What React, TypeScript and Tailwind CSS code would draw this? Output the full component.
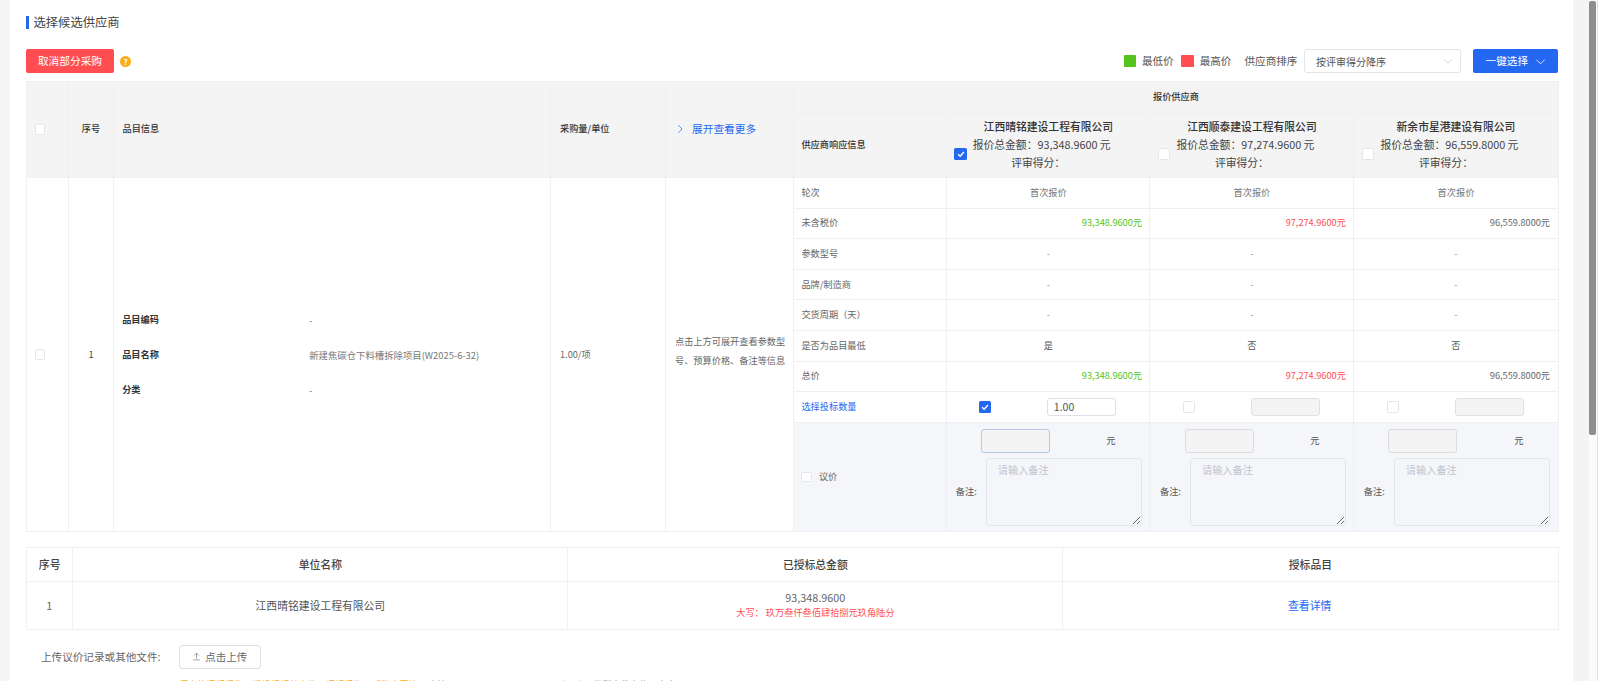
import React from "react";

function Chevron({ dir = "down", className = "" }: { dir?: "down" | "right"; className?: string }) {
  return (
    <svg viewBox="0 0 12 12" className={className} fill="none" stroke="currentColor" strokeWidth="0.9">
      {dir === "down" ? <polyline points="1.5,4 6,8.5 10.5,4" /> : <polyline points="4,1.5 8.5,6 4,10.5" />}
    </svg>
  );
}

function Box({ checked = false, big = false }: { checked?: boolean; big?: boolean }) {
  const size = big ? "w-[12.5px] h-[12.5px]" : "w-[10.5px] h-[10.5px]";
  if (checked) {
    return (
      <div className={`${size} shrink-0 rounded-[1.5px] bg-[#2468f2] flex items-center justify-center`}>
        <svg viewBox="0 0 12 12" className="w-[10px] h-[10px]" fill="none" stroke="#ffffff" strokeWidth="1.7">
          <polyline points="2.5,6.2 5,8.6 9.5,3.6" />
        </svg>
      </div>
    );
  }
  return <div className={`${size} shrink-0 rounded-[1.5px] bg-white border border-[#e4e6ec]`} />;
}

type Sup = { name: string; total: string; checked: boolean };
const suppliers: Sup[] = [
  { name: "江西晴铭建设工程有限公司", total: "93,348.9600", checked: true },
  { name: "江西顺泰建设工程有限公司", total: "97,274.9600", checked: false },
  { name: "新余市星港建设有限公司", total: "96,559.8000", checked: false },
];
const prices = [
  { v: "93,348.9600元", c: "text-[#52c41a]" },
  { v: "97,274.9600元", c: "text-[#ff4d52]" },
  { v: "96,559.8000元", c: "text-[#666666]" },
];

const bd = "border border-[#eff0f5]";
const th = `${bd} bg-[#f4f4f4] text-[9.2px] font-medium text-[#333333]`;

function Row({ label, children, blue = false }: { label: string; children: React.ReactNode; blue?: boolean }) {
  return (
    <tr className="h-[30.6px]">
      <td className={`${bd} pl-[7px] text-[9.2px] ${blue ? "text-[#2468f2]" : "text-[#666666]"}`}>{label}</td>
      {children}
    </tr>
  );
}

function Dash3() {
  return (
    <>
      {[0, 1, 2].map((i) => (
        <td key={i} className={`${bd} text-center text-[9.2px] text-[#999999]`}>-</td>
      ))}
    </>
  );
}

function Prices() {
  return (
    <>
      {prices.map((p) => (
        <td key={p.v} className={`${bd} text-right pr-[7.5px] text-[9.2px] ${p.c}`}>{p.v}</td>
      ))}
    </>
  );
}

function Info({ label, value }: { label: string; value: string }) {
  return (
    <div className="flex items-center h-[35px]">
      <div className="w-[187px] shrink-0 font-semibold text-[#333333]">{label}</div>
      <div className="text-[9.4px] text-[#777777]">{value}</div>
    </div>
  );
}

export default function App() {
  return (
    <div
      className="flex h-[681px] w-full overflow-hidden bg-white text-[#333333]"
      style={{ fontFamily: '"Noto Sans CJK SC", "Noto Sans", sans-serif' }}
    >
      <div className="w-[10px] shrink-0 bg-[#f5f5f5]" />
      <main className="flex-1 min-w-0 pl-[16px] pr-[15.4px] overflow-hidden">
        <div className="mt-[15px] flex items-center h-[15px]">
          <div className="w-[3px] h-[13px] bg-[#2468f2]" />
          <div className="ml-[4.5px] text-[12.3px] text-[#444444] leading-none">选择候选供应商</div>
        </div>

        <div className="mt-[19px] flex items-center h-[24.4px]">
          <button className="w-[88px] h-full rounded-[2px] bg-[#ff4d52] text-white text-[10.7px]">取消部分采购</button>
          <div className="ml-[6px] w-[11px] h-[11px] rounded-full bg-[#faad14] text-white text-[8px] font-bold leading-[11px] text-center">?</div>
          <div className="ml-auto flex items-center h-full">
            <div className="w-[12px] h-[12.5px] rounded-[1px] bg-[#52c41a]" />
            <span className="ml-[5.5px] text-[10.6px] text-[#555555]">最低价</span>
            <div className="ml-[7.5px] w-[13px] h-[12.5px] rounded-[1px] bg-[#ff4d52]" />
            <span className="ml-[5.5px] text-[10.6px] text-[#555555]">最高价</span>
            <span className="ml-[13px] text-[10.6px] text-[#555555]">供应商排序</span>
            <div className="ml-[6.5px] w-[156.7px] h-full rounded-[3px] border border-[#e2e4ea] bg-white flex items-center pl-[11px] pr-[7px]">
              <span className="text-[10px] text-[#555555]">按评审得分降序</span>
              <Chevron className="ml-auto w-[10px] h-[10px] text-[#c0c4cc]" />
            </div>
            <button className="ml-[12px] w-[85px] h-full rounded-[2px] bg-[#2468f2] text-white text-[10.6px] flex items-center pl-[13px]">
              一键选择
              <Chevron className="ml-[7px] w-[11px] h-[11px] text-white" />
            </button>
          </div>
        </div>

        <table className="mt-[7.3px] w-full table-fixed border-collapse">
          <colgroup>
            <col className="w-[42px]" />
            <col className="w-[45px]" />
            <col className="w-[437px]" />
            <col className="w-[115px]" />
            <col className="w-[128.4px]" />
            <col className="w-[152.9px]" />
            <col className="w-[203.2px]" />
            <col className="w-[203.9px]" />
            <col className="w-[204.2px]" />
          </colgroup>
          <thead>
            <tr className="h-[31.3px]">
              <th rowSpan={2} className={th}>
                <div className="flex pl-[7.5px]"><Box /></div>
              </th>
              <th rowSpan={2} className={th}>序号</th>
              <th rowSpan={2} className={`${th} text-left pl-[8.5px]`}>品目信息</th>
              <th rowSpan={2} className={`${th} text-left pl-[9px]`}>采购量/单位</th>
              <th rowSpan={2} className={`${th} font-normal`}>
                <div className="flex items-center pl-[8.5px] text-[#2468f2] text-[10.7px]">
                  <Chevron dir="right" className="w-[10px] h-[10px]" />
                  <span className="ml-[7.5px]">展开查看更多</span>
                </div>
              </th>
              <th colSpan={4} className={th}>报价供应商</th>
            </tr>
            <tr className="h-[65px]">
              <th className={`${th} text-left pl-[7px]`}>供应商响应信息</th>
              {suppliers.map((s) => (
                <th key={s.name} className={`${th} font-normal text-[10.8px] leading-[17.7px] text-[#444444]`}>
                  <div className="text-center font-medium text-[#333333]">{s.name}</div>
                  <div className={`flex items-center pr-[33px] ${s.checked ? "pl-[7px]" : "pl-[7.5px]"}`}>
                    <Box checked={s.checked} big />
                    <div className="flex-1 text-center">
                      <div>报价总金额：{s.total} 元</div>
                      <div className="pr-[7px]">评审得分：</div>
                    </div>
                  </div>
                </th>
              ))}
            </tr>
          </thead>
          <tbody>
            <tr className="h-[30.6px]">
              <td rowSpan={9} className={bd}>
                <div className="flex pl-[7.5px]"><Box /></div>
              </td>
              <td rowSpan={9} className={`${bd} text-center text-[9.2px] text-[#444444]`}>1</td>
              <td rowSpan={9} className={`${bd} pl-[8.2px] text-[9.2px]`}>
                <Info label="品目编码" value="-" />
                <Info label="品目名称" value="新建焦碳仓下料槽拆除项目(W2025-6-32)" />
                <Info label="分类" value="-" />
              </td>
              <td rowSpan={9} className={`${bd} pl-[9px] text-[9.2px] text-[#666666]`}>1.00/项</td>
              <td rowSpan={9} className={`${bd} pl-[9px] pr-[7px] pb-[7px] text-[9.2px] leading-[19px] text-[#666666]`}>
                点击上方可展开查看参数型号、预算价格、备注等信息
              </td>
              <td className={`${bd} pl-[7px] text-[9.2px] text-[#666666]`}>轮次</td>
              {suppliers.map((s) => (
                <td key={s.name} className={`${bd} text-center text-[9.2px] text-[#777777]`}>首次报价</td>
              ))}
            </tr>
            <Row label="未含税价"><Prices /></Row>
            <Row label="参数型号"><Dash3 /></Row>
            <Row label="品牌/制造商"><Dash3 /></Row>
            <Row label="交货周期（天）"><Dash3 /></Row>
            <Row label="是否为品目最低">
              {["是", "否", "否"].map((v, i) => (
                <td key={i} className={`${bd} text-center text-[9.2px] text-[#555555]`}>{v}</td>
              ))}
            </Row>
            <Row label="总价"><Prices /></Row>
            <Row label="选择投标数量" blue>
              {suppliers.map((s) => (
                <td key={s.name} className={bd}>
                  <div className={`flex items-center ${s.checked ? "pl-[31.5px]" : "pl-[32.5px]"}`}>
                    <Box checked={s.checked} big />
                    <input
                      disabled={!s.checked}
                      defaultValue={s.checked ? "1.00" : ""}
                      className={`ml-[55.5px] w-[69px] h-[18.4px] rounded-[3px] border border-[#dfe1e6] px-[6px] text-[10.6px] text-[#555555] ${s.checked ? "bg-white" : "bg-[#f4f4f4]"}`}
                    />
                  </div>
                </td>
              ))}
            </Row>
            <tr className="h-[109.7px] bg-[#f4f6fa]">
              <td className={bd}>
                <div className="flex items-center pl-[7px]">
                  <Box />
                  <span className="ml-[7px] text-[9.2px] text-[#666666]">议价</span>
                </div>
              </td>
              {suppliers.map((s, i) => (
                <td key={s.name} className={`${bd} pr-[7.5px]`}>
                  <div className={`flex items-center ${i === 0 ? "pl-[34px]" : i === 1 ? "pl-[35px]" : "pl-[34px]"}`}>
                    <input
                      disabled
                      className={`w-[68.4px] h-[24px] rounded-[3px] border bg-[#f4f4f4] ${s.checked ? "border-[#b4c8ea]" : "border-[#dcdcdc]"}`}
                    />
                    <span className={`${i === 2 ? "ml-[57.5px]" : "ml-[56.5px]"} text-[9.2px] text-[#555555]`}>元</span>
                  </div>
                  <div className={`mt-[5.5px] flex items-center ${i === 0 ? "pl-[8.5px]" : "pl-[9.5px]"}`}>
                    <span className="w-[30px] shrink-0 text-[9.2px] text-[#555555]">备注:</span>
                    <textarea
                      placeholder="请输入备注"
                      readOnly
                      className="block flex-1 min-w-0 h-[67.4px] rounded-[3px] border border-[#e2e5ec] bg-[#f4f6fa] px-[11px] pt-[3px] text-[10.2px] outline-none resize-y placeholder:text-[#c0c4cc]"
                    />
                  </div>
                </td>
              ))}
            </tr>
          </tbody>
        </table>

        <table className="mt-[14.3px] w-full table-fixed border-collapse text-center text-[10.8px]">
          <colgroup>
            <col className="w-[46.3px]" />
            <col className="w-[495.1px]" />
            <col className="w-[494.9px]" />
            <col className="w-[495.3px]" />
          </colgroup>
          <thead>
            <tr className="h-[34.4px]">
              {["序号", "单位名称", "已授标总金额", "授标品目"].map((h) => (
                <th key={h} className={`${bd} font-medium text-[#444444]`}>{h}</th>
              ))}
            </tr>
          </thead>
          <tbody>
            <tr className="h-[47.6px]">
              <td className={`${bd} pr-[1px] text-[#666666]`}>1</td>
              <td className={`${bd} text-[#555555]`}>江西晴铭建设工程有限公司</td>
              <td className={bd}>
                <div className="text-[#666666] leading-[15px]">93,348.9600</div>
                <div className="text-[9.2px] text-[#ff4d52] leading-[15px]">大写： 玖万叁仟叁佰肆拾捌元玖角陆分</div>
              </td>
              <td className={`${bd} pr-[1.5px] text-[#2468f2]`}>查看详情</td>
            </tr>
          </tbody>
        </table>

        <div className="mt-[15px] flex items-center h-[24.4px] pl-[15px]">
          <span className="w-[138px] shrink-0 text-[10.6px] text-[#666666]">上传议价记录或其他文件:</span>
          <button className="w-[81.7px] h-full rounded-[3px] border border-[#dcdfe6] bg-white flex items-center justify-center text-[10.5px] text-[#666666]">
            <svg viewBox="0 0 12 12" className="w-[9px] h-[9px] mr-[4px]" fill="none" stroke="#777777" strokeWidth="0.9">
              <polyline points="3,4.5 6,1.5 9,4.5" />
              <line x1="6" y1="1.5" x2="6" y2="8.5" />
              <line x1="1.5" y1="10.5" x2="10.5" y2="10.5" />
            </svg>
            点击上传
          </button>
        </div>
        <div className="mt-[8px] pl-[153px] text-[9.2px] leading-[14px] whitespace-nowrap">
          <span className="text-[#faad14]">须上传评标报告、招投标相关文件、评标报告、采购合同等</span>
          <span className="ml-[10px] text-[#999999]">支持 .jpg .jpeg .png .doc .docx .xls .xlsx 类型文件上传，大小</span>
        </div>
      </main>
      <div className="w-[16px] shrink-0 bg-[#f4f4f4]" />
      <div className="w-[9px] shrink-0 bg-[#fbfbfb] border-r border-[#e0e0e0] pt-[1px]">
        <div className="w-[7px] h-[434px] rounded-[2px] bg-[#8e8e8e]" />
      </div>
      <div className="w-[2px] shrink-0 bg-white" />
    </div>
  );
}
